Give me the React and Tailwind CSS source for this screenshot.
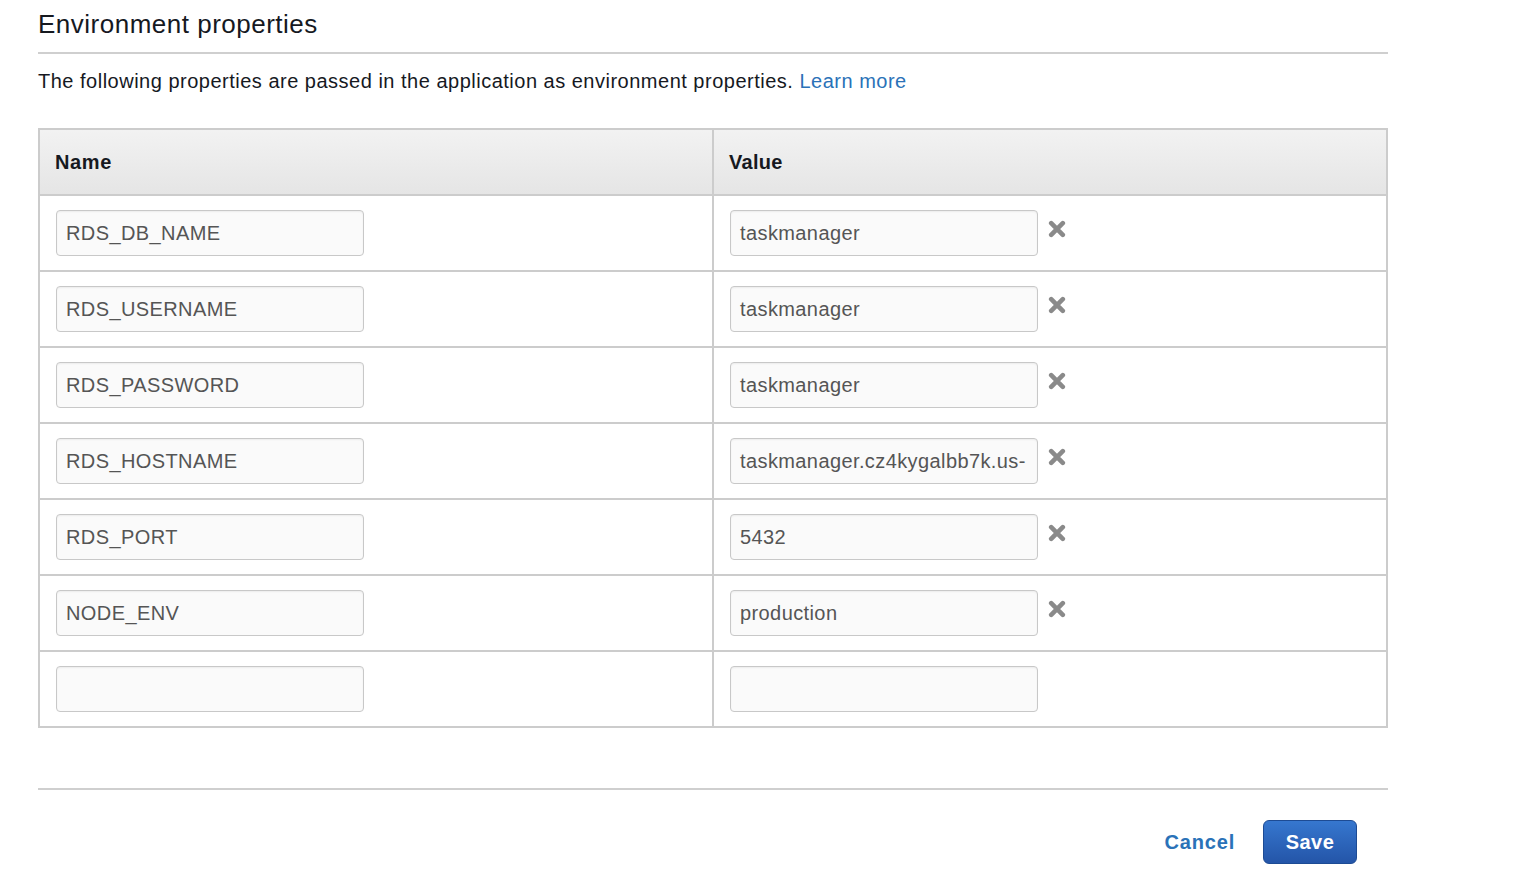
import React from "react";

const rows = [
  ["RDS_DB_NAME", "taskmanager"],
  ["RDS_USERNAME", "taskmanager"],
  ["RDS_PASSWORD", "taskmanager"],
  ["RDS_HOSTNAME", "taskmanager.cz4kygalbb7k.us-"],
  ["RDS_PORT", "5432"],
  ["NODE_ENV", "production"],
  ["", ""],
];

function Cross() {
  return (
    <svg width="18" height="18" viewBox="0 0 18 18" className="shrink-0">
      <path d="M3.2 3.2 L14.8 14.8 M14.8 3.2 L3.2 14.8" stroke="#8a8a8a" strokeWidth="4.6" strokeLinecap="round" fill="none" />
    </svg>
  );
}

function Field({ value }) {
  return (
    <div className="w-[308px] h-[46px] border border-[#c8c8c8] rounded-[4px] bg-[#fafafa] shadow-[inset_0_1px_2px_rgba(0,0,0,0.06)] pl-[9px] pr-[6px] flex items-center overflow-hidden">
      <span className="text-[20px] text-[#555] whitespace-nowrap leading-none tracking-[0.4px]">{value}</span>
    </div>
  );
}

export default function App() {
  return (
    <div className="min-h-[876px] bg-white font-['Liberation_Sans',Arial,sans-serif] text-[#16191f]">
      <div className="ml-[38px] w-[1350px]">
        <h2 className="pt-[9px] text-[26px] leading-[30px] font-normal text-[#16191f] tracking-[0.5px]">Environment properties</h2>
        <div className="mt-[13px] h-[2px] bg-[#cfcfcf]" />
        <p className="mt-[15px] text-[20px] leading-[24px] text-[#16191f] tracking-[0.5px]">
          The following properties are passed in the application as environment properties.{" "}
          <a className="text-[#2a72b8]" href="#">Learn more</a>
        </p>

        <div className="mt-[35px] border-2 border-[#cccccc]">
          <div className="grid grid-cols-[674px_1fr] h-[66px] border-b-2 border-[#cccccc] bg-linear-to-b from-[#f2f2f2] to-[#e5e5e5]">
            <div className="border-r-2 border-[#cccccc] flex items-center pl-[15px] text-[20px] font-bold tracking-[0.6px]">Name</div>
            <div className="flex items-center pl-[15px] text-[20px] font-bold tracking-[0.3px]">Value</div>
          </div>
          {rows.map(([name, value], i) => (
            <div
              key={i}
              className={
                i === rows.length - 1
                  ? "grid grid-cols-[674px_1fr] h-[74px]"
                  : "grid grid-cols-[674px_1fr] h-[76px] border-b-2 border-[#cccccc]"
              }
            >
              <div className="border-r-2 border-[#cccccc] pl-[16px] pt-[14px]">
                <Field value={name} />
              </div>
              <div className="pl-[16px] pt-[14px] flex items-start gap-[10px]">
                <Field value={value} />
                {name !== "" && (
                  <div className="mt-[10px]">
                    <Cross />
                  </div>
                )}
              </div>
            </div>
          ))}
        </div>

        <div className="mt-[60px] h-[2px] bg-[#cfcfcf]" />

        <div className="mt-[30px] flex justify-end items-center pr-[31px] gap-[28px]">
          <button className="text-[20px] font-bold text-[#2a72b8] tracking-[0.8px]">Cancel</button>
          <button className="w-[94px] h-[44px] rounded-[6px] border border-[#1d4b94] bg-linear-to-b from-[#3677cf] to-[#2455a8] text-white text-[20px] font-bold tracking-[0.4px]">
            Save
          </button>
        </div>
      </div>
    </div>
  );
}
